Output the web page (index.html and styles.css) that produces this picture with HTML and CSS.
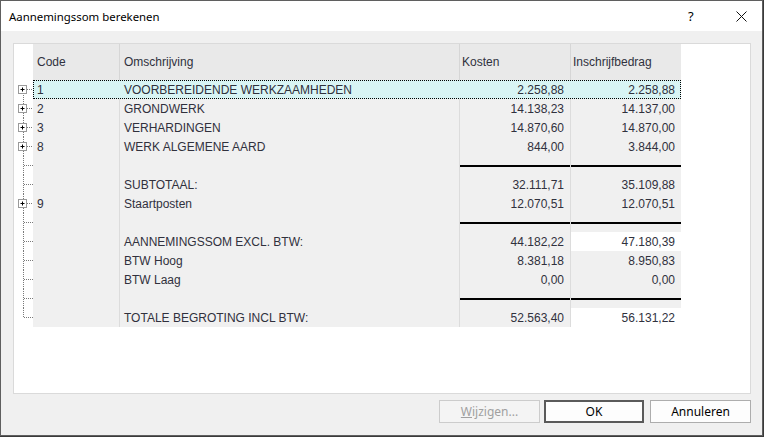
FILE: index.html
```html
<!DOCTYPE html>
<html>
<head>
<meta charset="utf-8">
<link rel="stylesheet" href="styles.css">
</head>
<body>
<div class="window">
  <div class="titlebar">
    <span class="title">Aannemingssom berekenen</span>
    <span class="help">?</span>
    <span class="close"><svg width="11" height="11" viewBox="0 0 11 11"><path d="M0.5 0.5 L10.5 10.5 M10.5 0.5 L0.5 10.5" stroke="#111" stroke-width="1"/></svg></span>
  </div>
  <div class="content">
    <div class="panel">
      <div class="row head">
        <div class="tree"></div>
        <div class="cells">
          <div class="c code">Code</div>
          <div class="c oms">Omschrijving</div>
          <div class="c num h">Kosten</div>
          <div class="c num h">Inschrijfbedrag</div>
        </div>
      </div>

      <div class="row">
        <div class="tree"><svg width="19" height="19"><path d="M9.5 9 V19" class="dot"/><path d="M13 9.5 H19" class="dot"/><rect x="4.5" y="5.5" width="8" height="8" class="box"/><path d="M6.5 9.5 H10.5 M8.5 7.5 V11.5" class="plus"/></svg></div>
        <div class="cells sel">
          <div class="c code">1</div>
          <div class="c oms">VOORBEREIDENDE WERKZAAMHEDEN</div>
          <div class="c num">2.258,88</div>
          <div class="c num">2.258,88</div>
        </div>
      </div>
      <div class="row">
        <div class="tree"><svg width="19" height="19"><path d="M9.5 0 V19" class="dot"/><path d="M13 9.5 H19" class="dot"/><rect x="4.5" y="5.5" width="8" height="8" class="box"/><path d="M6.5 9.5 H10.5 M8.5 7.5 V11.5" class="plus"/></svg></div>
        <div class="cells">
          <div class="c code">2</div>
          <div class="c oms">GRONDWERK</div>
          <div class="c num">14.138,23</div>
          <div class="c num">14.137,00</div>
        </div>
      </div>
      <div class="row">
        <div class="tree"><svg width="19" height="19"><path d="M9.5 0 V19" class="dot"/><path d="M13 9.5 H19" class="dot"/><rect x="4.5" y="5.5" width="8" height="8" class="box"/><path d="M6.5 9.5 H10.5 M8.5 7.5 V11.5" class="plus"/></svg></div>
        <div class="cells">
          <div class="c code">3</div>
          <div class="c oms">VERHARDINGEN</div>
          <div class="c num">14.870,60</div>
          <div class="c num">14.870,00</div>
        </div>
      </div>
      <div class="row">
        <div class="tree"><svg width="19" height="19"><path d="M9.5 0 V19" class="dot"/><path d="M13 9.5 H19" class="dot"/><rect x="4.5" y="5.5" width="8" height="8" class="box"/><path d="M6.5 9.5 H10.5 M8.5 7.5 V11.5" class="plus"/></svg></div>
        <div class="cells">
          <div class="c code">8</div>
          <div class="c oms">WERK ALGEMENE AARD</div>
          <div class="c num">844,00</div>
          <div class="c num">3.844,00</div>
        </div>
      </div>
      <div class="row">
        <div class="tree"><svg width="19" height="19"><path d="M9.5 0 V19" class="dot"/><path d="M10 9.5 H19" class="dot"/></svg></div>
        <div class="cells">
          <div class="c code"></div>
          <div class="c oms"></div>
          <div class="c num"><span class="line"></span></div>
          <div class="c num"><span class="line"></span></div>
        </div>
      </div>
      <div class="row">
        <div class="tree"><svg width="19" height="19"><path d="M9.5 0 V19" class="dot"/><path d="M10 9.5 H19" class="dot"/></svg></div>
        <div class="cells">
          <div class="c code"></div>
          <div class="c oms">SUBTOTAAL:</div>
          <div class="c num">32.111,71</div>
          <div class="c num">35.109,88</div>
        </div>
      </div>
      <div class="row">
        <div class="tree"><svg width="19" height="19"><path d="M9.5 0 V19" class="dot"/><path d="M13 9.5 H19" class="dot"/><rect x="4.5" y="5.5" width="8" height="8" class="box"/><path d="M6.5 9.5 H10.5 M8.5 7.5 V11.5" class="plus"/></svg></div>
        <div class="cells">
          <div class="c code">9</div>
          <div class="c oms">Staartposten</div>
          <div class="c num">12.070,51</div>
          <div class="c num">12.070,51</div>
        </div>
      </div>
      <div class="row">
        <div class="tree"><svg width="19" height="19"><path d="M9.5 0 V19" class="dot"/><path d="M10 9.5 H19" class="dot"/></svg></div>
        <div class="cells">
          <div class="c code"></div>
          <div class="c oms"></div>
          <div class="c num"><span class="line"></span></div>
          <div class="c num"><span class="line"></span></div>
        </div>
      </div>
      <div class="row">
        <div class="tree"><svg width="19" height="19"><path d="M9.5 0 V19" class="dot"/><path d="M10 9.5 H19" class="dot"/></svg></div>
        <div class="cells">
          <div class="c code"></div>
          <div class="c oms">AANNEMINGSSOM EXCL. BTW:</div>
          <div class="c num">44.182,22</div>
          <div class="c num white">47.180,39</div>
        </div>
      </div>
      <div class="row">
        <div class="tree"><svg width="19" height="19"><path d="M9.5 0 V19" class="dot"/><path d="M10 9.5 H19" class="dot"/></svg></div>
        <div class="cells">
          <div class="c code"></div>
          <div class="c oms">BTW Hoog</div>
          <div class="c num">8.381,18</div>
          <div class="c num">8.950,83</div>
        </div>
      </div>
      <div class="row">
        <div class="tree"><svg width="19" height="19"><path d="M9.5 0 V19" class="dot"/><path d="M10 9.5 H19" class="dot"/></svg></div>
        <div class="cells">
          <div class="c code"></div>
          <div class="c oms">BTW Laag</div>
          <div class="c num">0,00</div>
          <div class="c num">0,00</div>
        </div>
      </div>
      <div class="row">
        <div class="tree"><svg width="19" height="19"><path d="M9.5 0 V19" class="dot"/><path d="M10 9.5 H19" class="dot"/></svg></div>
        <div class="cells">
          <div class="c code"></div>
          <div class="c oms"></div>
          <div class="c num"><span class="line"></span></div>
          <div class="c num"><span class="line"></span></div>
        </div>
      </div>
      <div class="row">
        <div class="tree"><svg width="19" height="19"><path d="M9.5 0 V10" class="dot"/><path d="M10 9.5 H19" class="dot"/></svg></div>
        <div class="cells">
          <div class="c code"></div>
          <div class="c oms">TOTALE BEGROTING INCL BTW:</div>
          <div class="c num">52.563,40</div>
          <div class="c num white">56.131,22</div>
        </div>
      </div>
    </div>
    <div class="buttons">
      <button class="btn disabled"><u>W</u>ijzigen...</button>
      <button class="btn default">OK</button>
      <button class="btn">Annuleren</button>
    </div>
  </div>
</div>
</body>
</html>
```
FILE: styles.css
```css
html, body {
  margin: 0;
  padding: 0;
  background: #3a3a3a;
}
.window {
  width: 763px;
  height: 436px;
  box-sizing: border-box;
  border: 1px solid #5f5f5f;
  background: #f0f0f0;
  display: flex;
  flex-direction: column;
  font-family: "Liberation Sans", Arial, sans-serif;
}
.titlebar {
  height: 30px;
  background: #ffffff;
  display: flex;
  align-items: center;
  font-family: "Noto Sans", "Open Sans", sans-serif;
  font-size: 11.4px;
  color: #000;
}
.title {
  margin-left: 8px;
  flex: 1;
}
.help {
  width: 14px;
  font-size: 13px;
  margin-right: 34px;
}
.close {
  width: 11px;
  height: 11px;
  margin-right: 15px;
  display: flex;
}
.content {
  flex: 1;
  padding: 12px 11px 0 12px;
  display: flex;
  flex-direction: column;
}
.panel {
  height: 351px;
  box-sizing: border-box;
  background: #ffffff;
  border: 1px solid #dadada;
  font-size: 12px;
  color: #30313d;
}
.row {
  display: flex;
  height: 19px;
  line-height: 18px;
}
.row.head {
  height: 36px;
  line-height: 36px;
}
.tree {
  width: 19px;
  height: 19px;
  flex: none;
}
.tree svg {
  display: block;
}
.dot {
  stroke: #7a7a7a;
  stroke-width: 1;
  stroke-dasharray: 1 1;
  fill: none;
}
.box {
  fill: #ffffff;
  stroke: #9a9a9a;
  stroke-width: 1;
}
.plus {
  stroke: #000;
  stroke-width: 1;
}
.cells {
  display: grid;
  grid-template-columns: 86px 340px 111px 111px;
  background: #f0f0f0;
}
.head .cells {
  background: #e9e9e9;
}
.c {
  box-sizing: border-box;
  white-space: nowrap;
  overflow: hidden;
  padding-top: 1px;
}
.head .c {
  padding-top: 0;
}
.code {
  padding-left: 4px;
}
.oms {
  padding-left: 4px;
  border-left: 1px solid #dcdcdc;
}
.num {
  text-align: right;
  padding-right: 6px;
  border-left: 1px solid #dcdcdc;
  display: flex;
  align-items: center;
  justify-content: flex-end;
}
.num.h {
  justify-content: flex-start;
  padding-left: 2px;
}
.head .oms, .head .num {
  border-left-color: #d6d6d6;
}
.cells.sel {
  background: #d8f4f4;
  outline: 1px dotted #000;
  outline-offset: -1px;
}
.cells.sel .oms, .cells.sel .num {
  border-left-color: transparent;
}
.line {
  display: block;
  height: 2px;
  background: #000;
  flex: 1;
  margin-right: -6px;
  margin-top: -1px;
}
.white {
  background: #ffffff;
}
.buttons {
  display: flex;
  justify-content: flex-end;
  margin-top: 6px;
  gap: 4px;
}
.btn {
  width: 101px;
  height: 23px;
  box-sizing: border-box;
  background: #fdfdfd;
  border: 1px solid #adadad;
  font-family: "Noto Sans", "Open Sans", sans-serif;
  font-size: 12px;
  color: #000;
  padding: 0;
}
.btn.disabled {
  background: #f4f4f4;
  border-color: #cccccc;
  color: #a0a0a0;
}
.btn.default {
  width: 100px;
  border: 2px solid #5a5a5a;
  margin-right: 2px;
}
```
